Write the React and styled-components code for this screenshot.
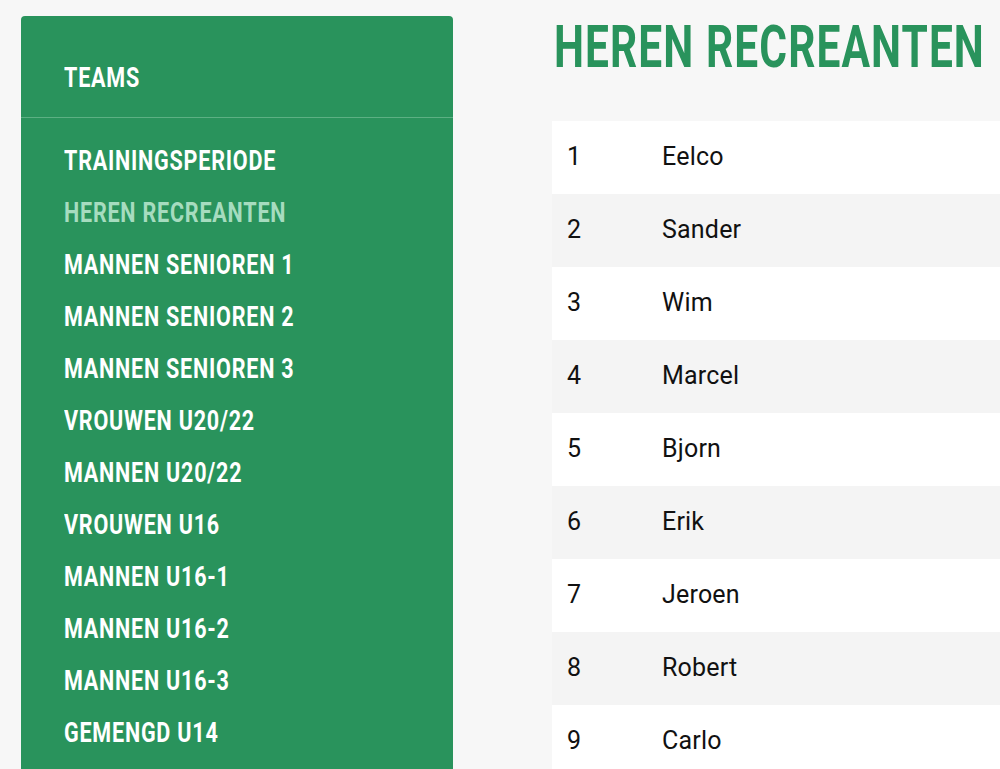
import React from 'react'
import styled, { createGlobalStyle } from 'styled-components'

const GlobalStyle = createGlobalStyle`
    html, body {
        margin: 0;
        padding: 0;
        background: #f7f7f7;
        overflow: hidden;
    }
`

const Pagina = styled.div`
    display: flex;
    align-items: flex-start;
    gap: 99px;
    padding: 16px 0 0 21px;
    height: 769px;
    box-sizing: border-box;
    overflow: hidden;
`

const Zijbalk = styled.nav`
    width: 432px;
    flex-shrink: 0;
    height: 800px;
    background-color: #29935c;
    border-radius: 4px 4px 0 0;
`

// smalle kapitalen, zoals de condensed letter van het origineel
const Smal = styled.span`
    display: inline-block;
    white-space: nowrap;
    transform: scaleX(${props => props.schaal || 0.77});
    transform-origin: left center;
`

const ZijbalkTitel = styled.div`
    height: 102px;
    padding: 22px 43px 0;
    display: flex;
    align-items: center;
    border-bottom: 1px solid #5cb083;
    box-sizing: border-box;
    color: #ffffff;
    font-family: Roboto, "Liberation Sans", sans-serif;
    font-weight: bold;
    font-size: 28px;
    letter-spacing: 1px;
`

const TeamLijst = styled.ul`
    list-style: none;
    margin: 0;
    padding: 16px 43px 0;
`

const TeamItem = styled.li`
    height: 52px;
    display: flex;
    align-items: center;
    color: ${props => props.actief ? '#a6dcbf' : '#ffffff'};
    font-family: Roboto, "Liberation Sans", sans-serif;
    font-weight: bold;
    font-size: 28px;
    letter-spacing: 1px;
`

const Inhoud = styled.main`
    flex: 1;
    min-width: 0;
`

const Kop = styled.h1`
    margin: 0;
    padding: 0 0 0 2px;
    height: 105px;
    line-height: 62px;
    color: #29935c;
    font-family: Roboto, "Liberation Sans", sans-serif;
    font-weight: bold;
    font-size: 59px;
    letter-spacing: 1.5px;
`

const Tabel = styled.div`
    display: flex;
    flex-direction: column;
`

const Rij = styled.div`
    display: flex;
    align-items: center;
    height: 73px;
    padding-bottom: 2px;
    box-sizing: border-box;
    background-color: ${props => props.grijs ? '#f4f4f4' : '#ffffff'};
    font-family: Roboto, "Liberation Sans", sans-serif;
    font-size: 25px;
    letter-spacing: 0.2px;
    color: #111111;
`

const Nummer = styled.span`
    width: 110px;
    padding-left: 15px;
    box-sizing: border-box;
`

const Naam = styled.span``

const teams = [
    'Trainingsperiode',
    'Heren Recreanten',
    'Mannen Senioren 1',
    'Mannen Senioren 2',
    'Mannen Senioren 3',
    'Vrouwen U20/22',
    'Mannen U20/22',
    'Vrouwen U16',
    'Mannen U16-1',
    'Mannen U16-2',
    'Mannen U16-3',
    'Gemengd U14'
]

const spelers = ['Eelco', 'Sander', 'Wim', 'Marcel', 'Bjorn', 'Erik', 'Jeroen', 'Robert', 'Carlo']

function App() {
    return (
        <>
            <GlobalStyle />
            <Pagina>
                <Zijbalk>
                    <ZijbalkTitel><Smal>TEAMS</Smal></ZijbalkTitel>
                    <TeamLijst>
                        {teams.map(team => (
                            <TeamItem key={team} actief={team === 'Heren Recreanten'}>
                                <Smal>{team.toUpperCase()}</Smal>
                            </TeamItem>
                        ))}
                    </TeamLijst>
                </Zijbalk>
                <Inhoud>
                    <Kop><Smal schaal={0.72}>HEREN RECREANTEN</Smal></Kop>
                    <Tabel>
                        {spelers.map((naam, i) => (
                            <Rij key={naam} grijs={i % 2 === 1}>
                                <Nummer>{i + 1}</Nummer>
                                <Naam>{naam}</Naam>
                            </Rij>
                        ))}
                    </Tabel>
                </Inhoud>
            </Pagina>
        </>
    )
}

export default App
